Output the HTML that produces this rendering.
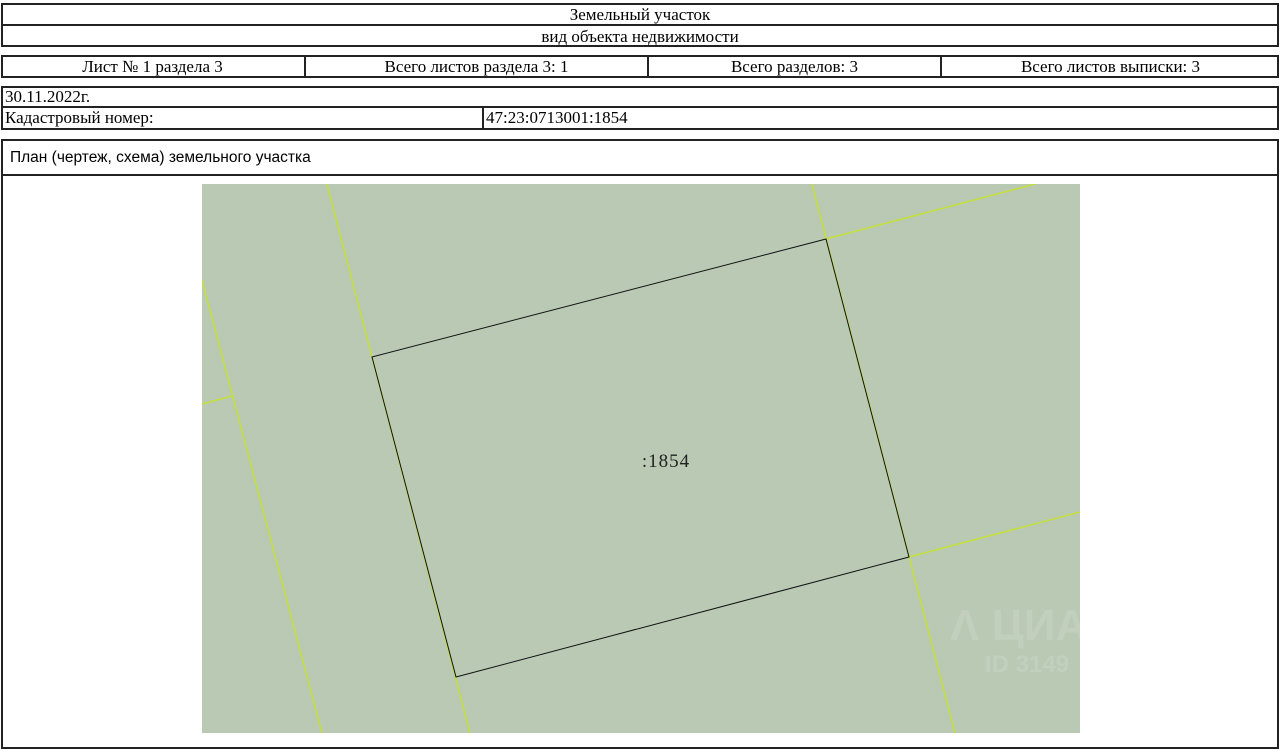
<!DOCTYPE html>
<html><head><meta charset="utf-8"><style>
body{margin:0;width:1280px;height:741px;background:#fff;position:relative;overflow:hidden;font-family:"Liberation Serif",serif;font-size:17px;color:#000}
.b{position:absolute;border:2px solid #222;box-sizing:border-box}
.t{position:absolute;white-space:nowrap;line-height:20px}
.c{text-align:center}
.v{position:absolute;width:2px;background:#222}
.h{position:absolute;height:2px;background:#222}
</style></head><body>
<div class="b" style="left:1px;top:3px;width:1278px;height:44px"></div>
<div class="h" style="left:1px;top:24px;width:1278px"></div>
<div class="t c" style="left:0;top:5px;width:1280px">Земельный участок</div>
<div class="t c" style="left:0;top:27px;width:1280px">вид объекта недвижимости</div>

<div class="b" style="left:1px;top:55px;width:1278px;height:23px"></div>
<div class="v" style="left:304px;top:55px;height:23px"></div>
<div class="v" style="left:647px;top:55px;height:23px"></div>
<div class="v" style="left:940px;top:55px;height:23px"></div>
<div class="t c" style="left:0;top:57px;width:305px">Лист № 1 раздела 3</div>
<div class="t c" style="left:305px;top:57px;width:343px">Всего листов раздела 3: 1</div>
<div class="t c" style="left:648px;top:57px;width:293px">Всего разделов: 3</div>
<div class="t c" style="left:941px;top:57px;width:339px">Всего листов выписки: 3</div>

<div class="b" style="left:1px;top:86px;width:1278px;height:44px"></div>
<div class="h" style="left:1px;top:106px;width:1278px"></div>
<div class="v" style="left:482px;top:107px;height:22px"></div>
<div class="t" style="left:5px;top:87px">30.11.2022г.</div>
<div class="t" style="left:5px;top:108px">Кадастровый номер:</div>
<div class="t" style="left:486px;top:108px">47:23:0713001:1854</div>

<div class="b" style="left:1px;top:139px;width:1278px;height:610px"></div>
<div class="h" style="left:1px;top:174px;width:1278px"></div>
<div class="t" style="left:10px;top:148px;font-family:'Liberation Sans',sans-serif;font-size:15.5px">План (чертеж, схема) земельного участка</div>

<svg style="position:absolute;left:202px;top:184px" width="878" height="549" viewBox="202 184 878 549">
<rect x="202" y="184" width="878" height="549" fill="#b9c9b3"/>
<g stroke="#c6e03a" stroke-width="1.5" fill="none">
<line x1="327" y1="184" x2="470" y2="733"/>
<line x1="812" y1="184" x2="955" y2="733"/>
<line x1="826" y1="239" x2="1035" y2="184"/>
<line x1="909" y1="557" x2="1080" y2="512"/>
<line x1="202" y1="280" x2="322" y2="733"/>
<line x1="202" y1="404" x2="232" y2="396"/>
</g>
<polygon points="372,357 826,239 909,557 456,677" fill="none" stroke="#111" stroke-width="1"/>
<text x="666" y="467" font-family="Liberation Serif,serif" font-size="19" letter-spacing="1" text-anchor="middle" fill="#222">:1854</text>
<text x="950" y="640" font-family="Liberation Sans,sans-serif" font-weight="bold" font-size="44" fill="rgba(255,255,255,0.12)">Λ ЦИАН</text>
<text x="985" y="672" font-family="Liberation Sans,sans-serif" font-weight="bold" font-size="24" fill="rgba(255,255,255,0.12)">ID 3149</text>
</svg>
</body></html>
